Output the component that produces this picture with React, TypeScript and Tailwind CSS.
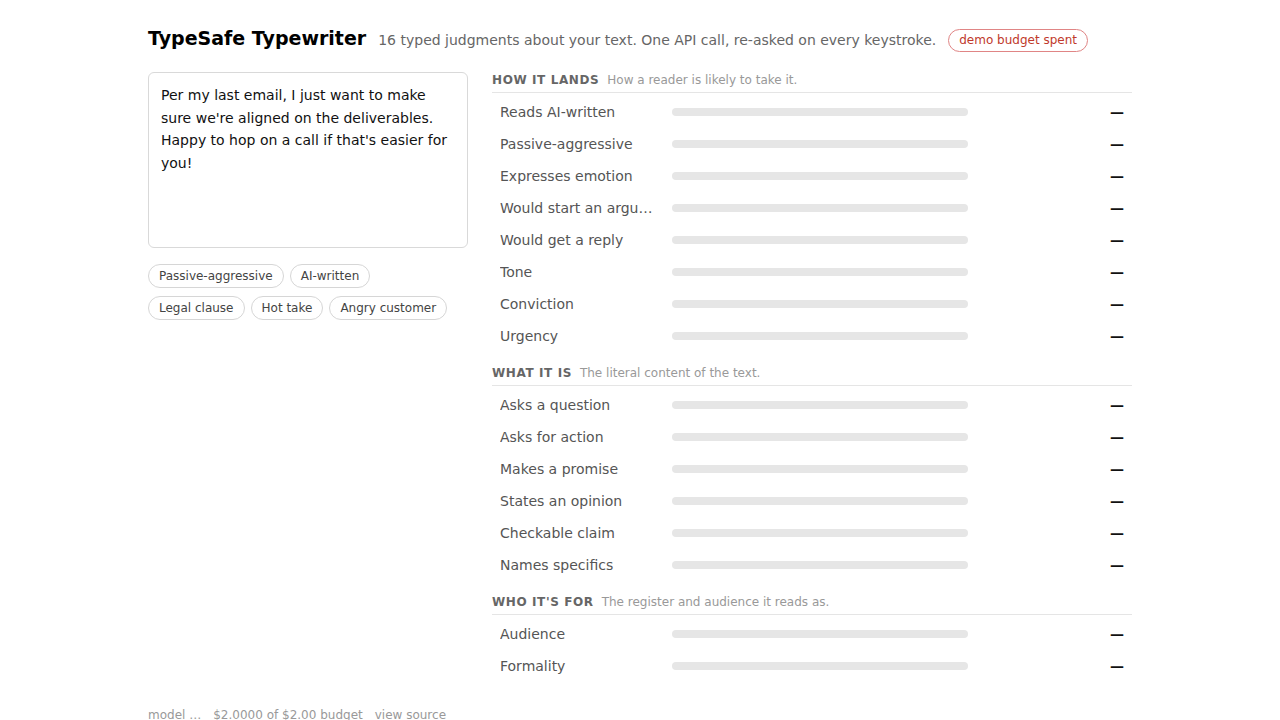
import { useState } from "react";

type Section = {
  title: string;
  note: string;
  items: string[];
};

const sections: Section[] = [
  {
    title: "How it lands",
    note: "How a reader is likely to take it.",
    items: [
      "Reads AI-written",
      "Passive-aggressive",
      "Expresses emotion",
      "Would start an argument",
      "Would get a reply",
      "Tone",
      "Conviction",
      "Urgency",
    ],
  },
  {
    title: "What it is",
    note: "The literal content of the text.",
    items: [
      "Asks a question",
      "Asks for action",
      "Makes a promise",
      "States an opinion",
      "Checkable claim",
      "Names specifics",
    ],
  },
  {
    title: "Who it's for",
    note: "The register and audience it reads as.",
    items: ["Audience", "Formality"],
  },
];

const presets = [
  ["Passive-aggressive", "AI-written"],
  ["Legal clause", "Hot take", "Angry customer"],
];

const ScoreRow = ({ label }: { label: string }) => (
  <div className="flex h-8 items-center px-2">
    <div className="w-[160px] truncate text-[14px] text-[#555]">{label}</div>
    <div className="ml-3 h-2 w-[296px] rounded-full bg-[#e6e6e6]" />
    <div className="ml-auto text-[14px] font-bold leading-none text-[#111]">—</div>
  </div>
);

export default function App() {
  const [text, setText] = useState(
    "Per my last email, I just want to make sure we're aligned on the deliverables. Happy to hop on a call if that's easier for you!"
  );

  return (
    <div className="min-h-screen bg-white font-['DejaVu_Sans',sans-serif]">
      <div className="mx-auto w-[984px] pt-6">
        <header className="mb-5 flex h-7 items-baseline whitespace-nowrap">
          <h1 className="text-[19px] font-bold leading-7 text-black">TypeSafe Typewriter</h1>
          <p className="ml-3 text-[14px] text-[#666]">
            16 typed judgments about your text. One API call, re-asked on every keystroke.
          </p>
          <span className="ml-3 self-center translate-y-[2px] rounded-full border border-[#e08585] px-[10px] py-[2px] text-[12px] leading-[17px] text-[#c0392b]">
            demo budget spent
          </span>
        </header>

        <div className="flex gap-6">
          <div className="w-[320px] shrink-0">
            <textarea
              value={text}
              onChange={(e) => setText(e.target.value)}
              className="block h-[176px] w-full resize-none rounded-md border border-[#d9d9d9] px-3 pt-[11px] pb-3 text-[14px] leading-[22.7px] text-[#111] outline-none"
            />
            <div className="mt-4 flex flex-col gap-2">
              {presets.map((row, i) => (
                <div key={i} className="flex gap-[6px]">
                  {row.map((p) => (
                    <button
                      key={p}
                      className="h-6 rounded-full border border-[#d6d6d6] px-[10px] text-[12px] text-[#444]"
                    >
                      {p}
                    </button>
                  ))}
                </div>
              ))}
            </div>
          </div>

          <div className="flex-1">
            {sections.map((s, i) => (
              <section key={s.title} className={i > 0 ? "mt-[13px]" : ""}>
                <div className="flex items-baseline gap-2 border-b border-[#e5e5e5] pb-1 leading-4">
                  <h2 className="text-[12px] font-bold uppercase tracking-[0.05em] text-[#666]">{s.title}</h2>
                  <span className="text-[12px] text-[#999]">{s.note}</span>
                </div>
                <div className="mt-[3px]">
                  {s.items.map((item) => (
                    <ScoreRow key={item} label={item} />
                  ))}
                </div>
              </section>
            ))}
          </div>
        </div>

        <footer className="mt-6 flex gap-3 pb-6 text-[12px] text-[#999]">
          <span>model …</span>
          <span>$2.0000 of $2.00 budget</span>
          <a href="#" className="text-[#999]">view source</a>
        </footer>
      </div>
    </div>
  );
}
